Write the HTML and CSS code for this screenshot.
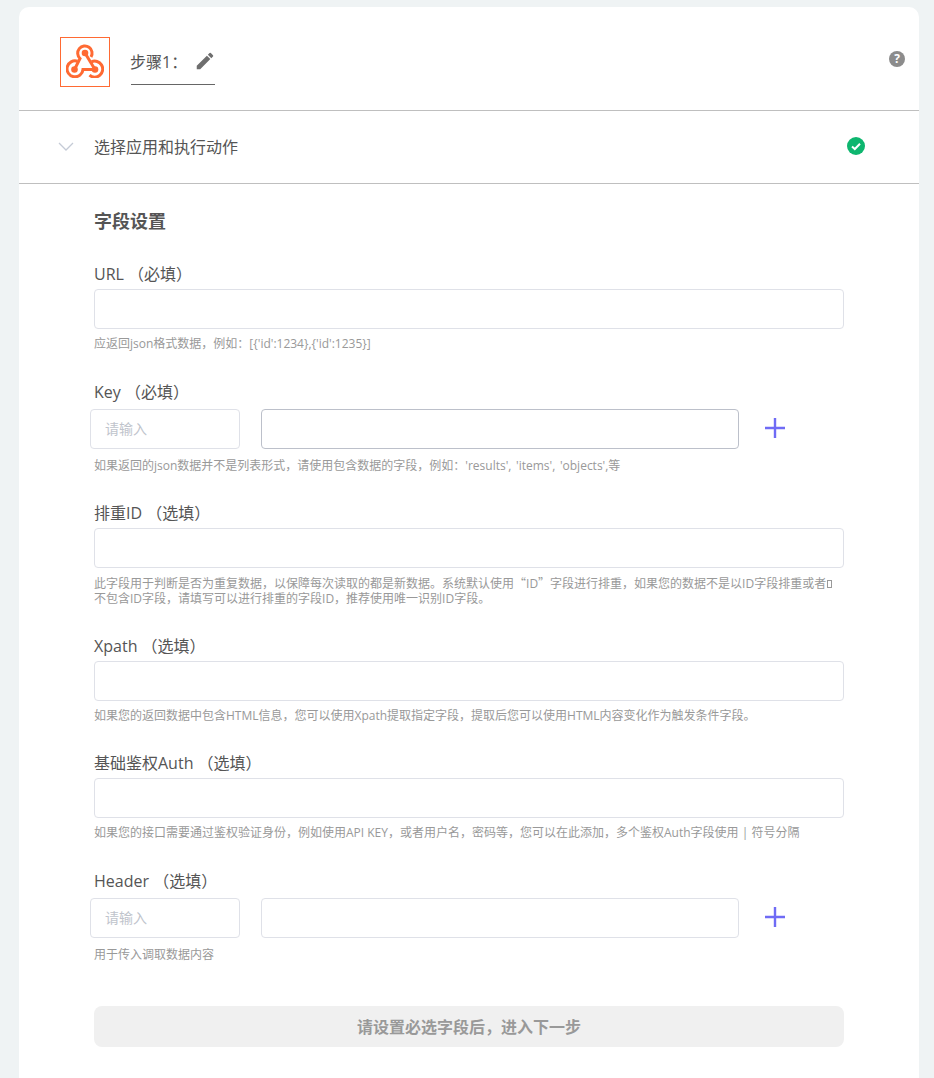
FILE: index.html
```html
<!DOCTYPE html>
<html lang="zh-CN">
<head>
<meta charset="utf-8">
<title>步骤1</title>
<link rel="stylesheet" href="styles.css">
</head>
<body>
<main class="card">
  <header class="head">
    <div class="logo">
      <svg class="hook" width="38" height="34" viewBox="0 0 38 34" fill="none" stroke="#ff6a33" stroke-width="3">
        <path d="M11.500 17.200 A8 8 0 1 0 17 25.500 H29"/>
        <path d="M8.500 25.500 L14 14.500 A7.200 7.200 0 1 1 25 13"/>
        <path d="M19 9 L29 25.500"/>
        <path d="M25.500 17.800 A8 8 0 1 1 23.500 31.200"/>
        <circle cx="8.500" cy="25.500" r="3.300" fill="#ff6a33" stroke="none"/>
        <circle cx="19" cy="9" r="3.300" fill="#ff6a33" stroke="none"/>
        <circle cx="29" cy="25.500" r="3.300" fill="#ff6a33" stroke="none"/>
      </svg>
    </div>
    <div class="step">
      <span class="step-name">步骤1：</span>
      <svg class="pencil" width="22" height="22" viewBox="0 0 24 24" fill="#6e6e6e"><path d="M3 17.250V21h3.750L17.810 9.940l-3.750-3.750L3 17.250zM20.710 7.040a1 1 0 0 0 0-1.410l-2.340-2.340a1 1 0 0 0-1.410 0l-1.830 1.830 3.750 3.750 1.830-1.830z"/></svg>
    </div>
    <span class="help-dot">?</span>
  </header>

  <section class="app-row">
    <svg class="chevron" width="16" height="9" viewBox="0 0 16 9" fill="none" stroke="#c5cbd6" stroke-width="1.300"><path d="M1 1l7 7 7-7"/></svg>
    <span class="app-title">选择应用和执行动作</span>
    <svg class="ok" width="18" height="18" viewBox="0 0 18 18"><circle cx="9" cy="9" r="9" fill="#0eb66f"/><path d="M5 9.500l2.800 2.500L13 6.800" fill="none" stroke="#fff" stroke-width="2"/></svg>
  </section>

  <form class="fields">
    <h2 class="title">字段设置</h2>

    <div class="field f-url">
      <label class="label">URL （必填）</label>
      <input class="input" type="text">
      <p class="hint">应返回json格式数据，例如：[{'id':1234},{'id':1235}]</p>
    </div>

    <div class="field f-key">
      <label class="label">Key （必填）</label>
      <div class="pair">
        <input class="input key" type="text" placeholder="请输入">
        <input class="input val focus" type="text">
        <svg class="plus" width="20" height="20" viewBox="0 0 20 20" stroke="#6f6bf5" stroke-width="2.400"><path d="M10 0v20M0 10h20"/></svg>
      </div>
      <p class="hint wide">如果返回的json数据并不是列表形式，请使用包含数据的字段，例如：'results', 'items', 'objects',等</p>
    </div>

    <div class="field f-dedupe">
      <label class="label">排重ID （选填）</label>
      <input class="input" type="text">
      <p class="hint">此字段用于判断是否为重复数据，以保障每次读取的都是新数据。系统默认使用<span class="cjk">“</span>ID<span class="cjk">”</span>字段进行排重，如果您的数据不是以ID字段排重或者<span class="tofu"></span><br>不包含ID字段，请填写可以进行排重的字段ID，推荐使用唯一识别ID字段。</p>
    </div>

    <div class="field f-xpath">
      <label class="label">Xpath （选填）</label>
      <input class="input" type="text">
      <p class="hint">如果您的返回数据中包含HTML信息，您可以使用Xpath提取指定字段，提取后您可以使用HTML内容变化作为触发条件字段。</p>
    </div>

    <div class="field f-auth">
      <label class="label">基础鉴权Auth （选填）</label>
      <input class="input" type="text">
      <p class="hint">如果您的接口需要通过鉴权验证身份，例如使用API KEY，或者用户名，密码等，您可以在此添加，多个鉴权Auth字段使用 | 符号分隔</p>
    </div>

    <div class="field f-header">
      <label class="label">Header （选填）</label>
      <div class="pair">
        <input class="input key" type="text" placeholder="请输入">
        <input class="input val" type="text">
        <svg class="plus" width="20" height="20" viewBox="0 0 20 20" stroke="#6f6bf5" stroke-width="2.400"><path d="M10 0v20M0 10h20"/></svg>
      </div>
      <p class="hint">用于传入调取数据内容</p>
    </div>

    <button class="next" type="button">请设置必选字段后，进入下一步</button>
  </form>
</main>
</body>
</html>
```
FILE: styles.css
```css
* { box-sizing: border-box; }
html, body { margin: 0; height: 100%; overflow: hidden; }
body {
  background: #eff3f4;
  padding: 7px 15px 0 19px;
  font-family: "Open Sans", "Noto Sans CJK SC", sans-serif;
  color: #555;
}
.card {
  background: #fff;
  border-radius: 10px 10px 0 0;
  width: 900px;
  height: 1071px;
}
.head {
  height: 104px;
  border-bottom: 1px solid #bfbfbf;
  padding: 30px 14px 0 41px;
  display: flex;
  align-items: flex-start;
}
.logo {
  width: 50px;
  height: 50px;
  border: 1px solid #ff6a33;
  display: flex;
  align-items: center;
  justify-content: center;
}
.hook { margin-bottom: 3px; }
.step {
  margin: 7px 0 0 21px;
  width: 84px;
  height: 41px;
  border-bottom: 1px solid #666;
  display: flex;
  align-items: flex-start;
  padding-top: 8px;
}
.step-name { font-size: 16px; line-height: 20px; color: #555; width: 64px; margin-left: -1px; flex: none; }
.pencil { margin-top: -2px; flex: none; }
.help-dot {
  margin: 14px 0 0 auto;
  width: 16px;
  height: 16px;
  border-radius: 50%;
  background: #8c8c8c;
  color: #fff;
  font-size: 12px;
  font-weight: 700;
  line-height: 16px;
  text-align: center;
}
.app-row {
  height: 73px;
  border-bottom: 1px solid #bfbfbf;
  display: flex;
  align-items: center;
  padding: 0 54px 2px 39px;
}
.app-title { font-size: 16px; margin-left: 20px; color: #555; }
.ok { margin-left: auto; }
.fields { padding: 0 75px; }
.title {
  margin: 25px 0 0;
  font-size: 18px;
  line-height: 24px;
  font-weight: 700;
  color: #555;
}
.field { display: block; }
.label {
  display: block;
  font-size: 16px;
  line-height: 20px;
  color: #555;
}
.input {
  display: block;
  height: 40px;
  width: 100%;
  border: 1px solid #dfe1e8;
  border-radius: 4px;
  background: #fff;
  outline: 0;
  padding: 0 15px;
  font: 14px "Open Sans", "Noto Sans CJK SC", sans-serif;
}
.input::placeholder { color: #c0c4cc; opacity: 1; }
.pair { display: flex; align-items: center; margin-left: -4px; margin-top: 7px; }
.key { width: 150px; flex: none; padding: 0 14px 2px; }
.val { width: 478px; flex: none; margin-left: 21px; }
.focus { border-color: #bcc0ca; }
.plus { margin: 0 0 2px 26px; flex: none; }
.hint {
  margin: 7px 0 0;
  font-size: 12px;
  line-height: 15px;
  color: #999;
  white-space: nowrap;
}
.wide { word-spacing: 1.5px; }
.cjk { font-family: "Noto Sans CJK SC", sans-serif; line-height: 1; }
.tofu {
  display: inline-block;
  width: 5px;
  height: 8px;
  margin-left: 1px;
  border: 1px solid #999;
}
.f-url { margin-top: 31px; }
.f-url .input { margin-top: 5px; }
.f-key { margin-top: 31px; }
.f-key .hint { margin-top: 9px; }
.f-dedupe { margin-top: 30px; }
.f-dedupe .input, .f-xpath .input, .f-auth .input { margin-top: 5px; }
.f-dedupe .hint { margin-top: 8px; }
.f-xpath { margin-top: 30px; }
.f-auth { margin-top: 30px; }
.f-header { margin-top: 31px; }
.f-header .hint { margin-top: 9px; }
.next {
  display: block;
  width: 100%;
  height: 41px;
  margin-top: 44px;
  padding: 0 0 2px;
  border: 0;
  border-radius: 8px;
  background: #f0f0f0;
  color: #999;
  font: 700 16px "Open Sans", "Noto Sans CJK SC", sans-serif;
}
```
